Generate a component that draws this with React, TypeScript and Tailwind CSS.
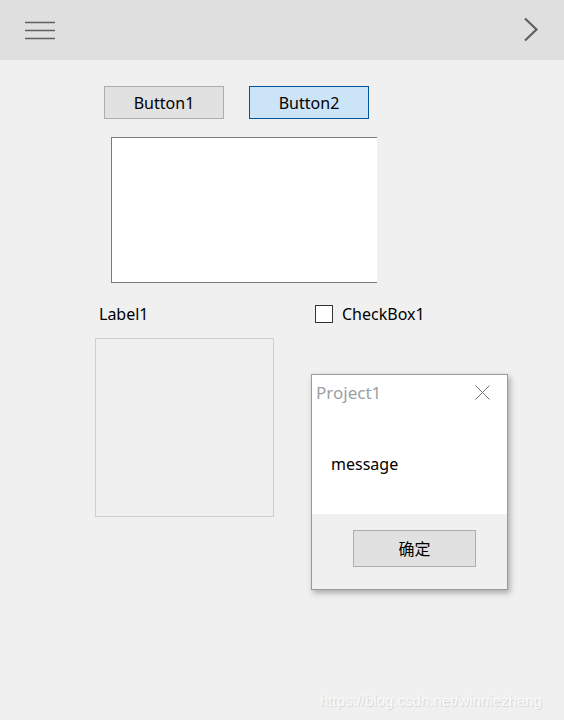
const FONT = { fontFamily: '"Noto Sans", "Noto Sans CJK SC", sans-serif' }

function MenuIcon() {
  return (
    <svg width="32" height="20" viewBox="0 0 32 20" className="block">
      <path d="M1 2.5h30M1 10.5h30M1 18.5h30" stroke="#5f5f5f" strokeWidth="1.6" />
    </svg>
  )
}

function ChevronIcon() {
  return (
    <svg width="16" height="26" viewBox="0 0 16 26" className="block">
      <path d="M2 1.5 13.5 12.5 2 23.5" fill="none" stroke="#5f5f5f" strokeWidth="2.2" />
    </svg>
  )
}

export default function App() {
  return (
    <div className="h-[720px] w-[564px] bg-[#f0f0f0] flex flex-col text-[#000]" style={FONT}>
      <header className="h-[60px] shrink-0 bg-[#dfdfdf] flex items-center justify-between pl-[24px] pr-[25px]">
        <MenuIcon />
        <ChevronIcon />
      </header>

      {/* buttons */}
      <div className="mt-[26px] ml-[104px] flex gap-[25px]">
        <button className="w-[120px] h-[33px] bg-[#e1e1e1] border border-[#adadad] text-[16px] leading-none">Button1</button>
        <button className="w-[120px] h-[33px] bg-[#cce4f7] border border-[#005499] text-[16px] leading-none">Button2</button>
      </div>

      {/* memo */}
      <div className="mt-[18px] ml-[111px] w-[266px] h-[146px] bg-white border border-r-0 border-[#7a7a7a]" />

      {/* label + checkbox */}
      <div className="mt-[22px] flex items-center h-[18px]">
        <span className="ml-[99px] w-[216px] text-[16px] leading-none">Label1</span>
        <span className="w-[18px] h-[18px] bg-white border border-[#333333]" />
        <span className="ml-[9px] text-[16px] leading-none">CheckBox1</span>
      </div>

      {/* panel + dialog */}
      <div className="mt-[15px] flex items-start">
        <div className="ml-[95px] w-[179px] h-[179px] border border-[#cfcfcf] bg-[#f0f0f0]" />
        <div className="ml-[37px] mt-[36px] w-[197px] h-[216px] border border-[#9a9a9a] shadow-[2px_3px_6px_rgba(0,0,0,0.3)] flex flex-col">
          <div className="bg-white h-[139px] flex flex-col">
            <div className="h-[34px] flex items-center justify-between pl-[4px] pr-[17px]">
              <span className="text-[17px] text-[#9aa0a6] leading-none">Project1</span>
              <svg width="15" height="15" viewBox="0 0 15 15" className="block">
                <path d="M0.5 0.5 14.5 14.5M14.5 0.5 0.5 14.5" stroke="#6f6f6f" strokeWidth="1" />
              </svg>
            </div>
            <span className="mt-[47px] ml-[19px] text-[16px] leading-none">message</span>
          </div>
          <div className="flex-1 bg-[#f0f0f0] flex pt-[16px] pl-[41px]">
            <button className="w-[123px] h-[37px] bg-[#e1e1e1] border border-[#adadad] text-[16px] leading-none">确定</button>
          </div>
        </div>
      </div>

      <div className="mt-auto mb-[12px] ml-[320px] text-[15px] leading-none text-[#fafafa] [text-shadow:1px_1px_1px_rgba(0,0,0,0.12)]" style={{ fontFamily: '"Liberation Sans", sans-serif' }}>
        https://blog.csdn.net/winniezhang
      </div>
    </div>
  )
}
